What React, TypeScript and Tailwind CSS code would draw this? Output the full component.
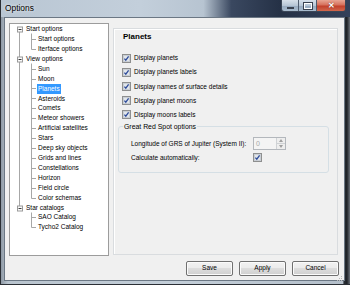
import React from 'react'

type Node = { label: string; children: string[] }

const tree: Node[] = [
  { label: 'Start options', children: ['Start options', 'Iterface options'] },
  {
    label: 'View options',
    children: [
      'Sun',
      'Moon',
      'Planets',
      'Asteroids',
      'Comets',
      'Meteor showers',
      'Artificial satellites',
      'Stars',
      'Deep sky objects',
      'Grids and lines',
      'Constellations',
      'Horizon',
      'Field circle',
      'Color schemas',
    ],
  },
  { label: 'Star catalogs', children: ['SAO Catalog', 'Tycho2 Catalog'] },
]

const ROW = 9.92

const options = [
  'Display planets',
  'Display planets labels',
  'Display names of surface details',
  'Display planet moons',
  'Display moons labels',
]

const CheckBox = () => (
  <svg width="9" height="9" viewBox="0 0 9 9" className="shrink-0">
    <rect x="0.5" y="0.5" width="8" height="8" fill="#f4f4f4" stroke="#8e8f8f" />
    <rect x="1.5" y="1.5" width="6" height="6" fill="#e2e6ea" stroke="#c9ced4" />
    <path d="M2.4 4.6 L3.8 6.2 L6.6 2.4" fill="none" stroke="#2d4b9a" strokeWidth="1.3" />
  </svg>
)

// connector lines + expander boxes of the tree, drawn over the list
const TreeLines = () => {
  const els: React.ReactNode[] = []
  let i = 0
  const rootRows: number[] = []
  tree.forEach((node, n) => {
    const cy = Math.floor(5.46 + ROW * i) + 0.5
    rootRows.push(cy)
    const first = i + 1
    const last = i + node.children.length
    const lastCy = Math.floor(5.46 + ROW * last) + 0.5
    els.push(
      <line key={`v${n}`} x1="21.5" y1={cy + 4} x2="21.5" y2={lastCy} stroke="#a7a7a7" />,
    )
    for (let c = first; c <= last; c++) {
      const y = Math.floor(5.46 + ROW * c) + 0.5
      els.push(<line key={`h${n}-${c}`} x1="21.5" y1={y} x2="26" y2={y} stroke="#a7a7a7" />)
    }
    i = last + 1
  })
  rootRows.forEach((cy, n) => {
    if (n < rootRows.length - 1) {
      els.push(
        <line key={`r${n}`} x1="9.5" y1={cy + 2.5} x2="9.5" y2={rootRows[n + 1] - 2.5} stroke="#a7a7a7" />,
      )
    }
    els.push(
      <g key={`b${n}`}>
        <rect x="7.5" y={cy - 2.5} width="5" height="5" fill="#fbfbfb" stroke="#9a9a9a" />
        <line x1="8.5" y1={cy} x2="11.5" y2={cy} stroke="#3a3a3a" />
      </g>,
    )
  })
  return (
    <svg width="98" height="230" className="absolute left-0 top-0 pointer-events-none">
      {els}
    </svg>
  )
}

const Button = ({ label }: { label: string }) => (
  <button className="w-[47px] h-[15px] rounded-[2px] border border-[#707070] bg-[linear-gradient(180deg,#f2f2f2_0%,#ebebeb_50%,#dddddd_50%,#cfcfcf_100%)] shadow-[inset_0_0_0_1px_#fbfbfb] text-[6.5px] leading-none text-black">
    {label}
  </button>
)

export default function App() {
  return (
    <div className="w-[350px] h-[285px] overflow-hidden flex flex-col bg-[linear-gradient(90deg,#8f9aa6_0%,#b9c4ce_2%,#c3ced8_50%,#b4bfca_97.9%,#2a2f36_98.3%,#1e2227_99.1%,#6a7079_100%)] border-l border-b border-[#2b2f35] font-['Liberation_Sans',Arial,sans-serif] text-black">
      {/* title bar */}
      <div className="h-[17px] shrink-0 flex items-start bg-[linear-gradient(90deg,#b9c6d3_0%,#c3cfdb_40%,#b7c4d1_58%,#3a4860_66%,#253146_80%,#34415a_100%)]">
        <span className="ml-[4px] mt-[3px] text-[8.4px] leading-[10px] [text-shadow:0_0_3px_#ffffff]">Options</span>
        <div className="ml-auto mr-[4px] flex h-[12px] rounded-b-[3px] border border-t-0 border-[#3b4657] overflow-hidden">
          <div className="w-[17px] flex items-end justify-center pb-[2px] bg-[linear-gradient(180deg,#d7e0ea_0%,#b7c6d6_50%,#98abc0_55%,#a9bccf_100%)] border-r border-[#4f5c6e]">
            <div className="w-[7px] h-[2px] bg-white border border-[#3a4250]" />
          </div>
          <div className="w-[18px] flex items-center justify-center bg-[linear-gradient(180deg,#d7e0ea_0%,#b7c6d6_50%,#98abc0_55%,#a9bccf_100%)] border-r border-[#4f5c6e]">
            <div className="w-[8px] h-[6px] border-[1.5px] border-white outline outline-[#3a4250]" />
          </div>
          <div className="w-[28px] flex items-center justify-center bg-[linear-gradient(180deg,#e8a593_0%,#d6705c_45%,#c2402b_55%,#d0664c_100%)]">
            <span className="text-white text-[8px] font-bold leading-none [text-shadow:0_0_1px_#5a1a10]">✕</span>
          </div>
        </div>
      </div>

      {/* client area */}
      <div className="ml-[3px] mr-[5px] h-[264px] border border-[#6b7784] bg-[#f0f0f0] flex flex-col">
        <div className="flex pl-[4px] pt-[5px]">
          {/* tree view */}
          <div className="relative w-[100px] h-[233px] bg-white border border-[#9c9c9c] pt-[0.5px] text-[6.5px]">
            <TreeLines />
            {tree.map((node) => (
              <React.Fragment key={node.label}>
                <div className="h-[9.92px] flex items-center pl-[16px] leading-none">{node.label}</div>
                {node.children.map((c) => (
                  <div key={c} className="h-[9.92px] flex items-center pl-[27px] leading-none">
                    <span
                      className={
                        c === 'Planets'
                          ? 'h-full flex items-center px-[1px] bg-[#3399ff] text-white'
                          : 'px-[1px]'
                      }
                    >
                      {c}
                    </span>
                  </div>
                ))}
              </React.Fragment>
            ))}
          </div>

          {/* settings page */}
          <div className="ml-[4px] mt-[5px] w-[225px] h-[227px] border border-[#d9dcdf] shadow-[inset_1px_1px_0_#ffffff] pt-[3px]">
            <div className="pl-[9px] text-[8px] font-bold leading-[10px]">Planets</div>
            <div className="mt-[9px] pl-[8px] flex flex-col">
              {options.map((o) => (
                <div key={o} className="h-[14.2px] flex items-center gap-[3px] text-[6.5px]">
                  <CheckBox />
                  <span>{o}</span>
                </div>
              ))}
            </div>
            <fieldset className="ml-[4px] mt-[1px] w-[211px] h-[50px] border border-[#d5dfe5] rounded-[3px] pl-[4px]">
              <legend className="px-[1px] text-[6.9px] leading-[8px]">Great Red Spot options</legend>
              <div className="pl-[8px] pt-[6px] text-[6.5px] flex flex-col">
                <div className="h-[13px] flex items-center">
                  <span className="w-[122px]">Longitude of GRS of Jupiter (System II):</span>
                  <div className="w-[33px] h-[13px] flex border border-[#b3b7bc] bg-[#f4f4f4]">
                    <span className="flex-1 pl-[2px] text-[#a8a8a8] leading-[11px] text-[7px]">0</span>
                    <div className="w-[9px] flex flex-col border-l border-[#cfd2d5]">
                      <div className="flex-1 flex items-center justify-center border-b border-[#cfd2d5] bg-[#eeeeee]">
                        <svg width="4" height="3" viewBox="0 0 4 3">
                          <path d="M0 3 L2 0 L4 3 Z" fill="#a0a0a0" />
                        </svg>
                      </div>
                      <div className="flex-1 flex items-center justify-center bg-[#eeeeee]">
                        <svg width="4" height="3" viewBox="0 0 4 3">
                          <path d="M0 0 L2 3 L4 0 Z" fill="#a0a0a0" />
                        </svg>
                      </div>
                    </div>
                  </div>
                </div>
                <div className="h-[15px] flex items-center">
                  <span className="w-[122px]">Calculate automatically:</span>
                  <CheckBox />
                </div>
              </div>
            </fieldset>
          </div>
        </div>

        {/* buttons */}
        <div className="mt-[5px] flex justify-end gap-[6px] pr-[5px]">
          <Button label="Save" />
          <Button label="Apply" />
          <Button label="Cancel" />
        </div>
        <div className="mt-auto flex justify-end pr-[1px] pb-[1px]">
          <svg width="6" height="6" viewBox="0 0 6 6">
            {[
              [4, 0],
              [2, 2],
              [4, 2],
              [0, 4],
              [2, 4],
              [4, 4],
            ].map(([x, y]) => (
              <rect key={`${x}-${y}`} x={x} y={y} width="1" height="1" fill="#b8b8b8" />
            ))}
          </svg>
        </div>
      </div>
    </div>
  )
}
